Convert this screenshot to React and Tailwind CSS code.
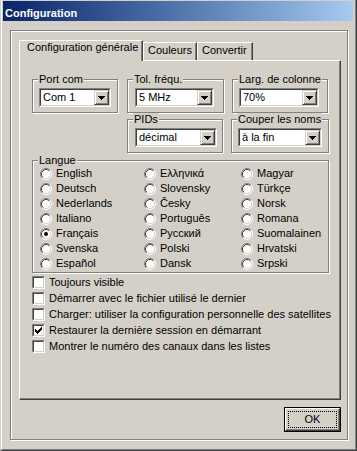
import React from 'react';

const FONT = "font-['Liberation_Sans',Arial,sans-serif]";

const languages = [
  'English', 'Ελληνικά', 'Magyar',
  'Deutsch', 'Slovensky', 'Türkçe',
  'Nederlands', 'Česky', 'Norsk',
  'Italiano', 'Português', 'Romana',
  'Français', 'Русский', 'Suomalainen',
  'Svenska', 'Polski', 'Hrvatski',
  'Español', 'Dansk', 'Srpski',
];

const options = [
  { label: 'Toujours visible', checked: false },
  { label: 'Démarrer avec le fichier utilisé le dernier', checked: false },
  { label: 'Charger: utiliser la configuration personnelle des satellites', checked: false },
  { label: 'Restaurer la dernière session en démarrant', checked: true },
  { label: 'Montrer le numéro des canaux dans les listes', checked: false },
];

function Group({ label, className, children }) {
  return (
    <div className={`relative border border-[#808080] shadow-[inset_1px_1px_0_#fff,1px_1px_0_#fff] ${className}`}>
      <span className="absolute -top-[7px] left-[5px] bg-[#d4d0c8] px-[1px] leading-[13px]">{label}</span>
      {children}
    </div>
  );
}

function Combo({ value, className }) {
  return (
    <div className={`h-[19px] border border-t-[#808080] border-l-[#808080] border-r-white border-b-white ${className}`}>
      <div className="flex h-full border border-t-[#404040] border-l-[#404040] border-r-[#d4d0c8] border-b-[#d4d0c8] bg-white">
        <span className="flex-1 pl-[2px] leading-[15px] whitespace-nowrap">{value}</span>
        <div className="flex h-full w-[15px] items-center justify-center border border-t-[#d4d0c8] border-l-[#d4d0c8] border-r-[#404040] border-b-[#404040] bg-[#d4d0c8] shadow-[inset_1px_1px_0_#fff,inset_-1px_-1px_0_#808080]">
          <svg width="7" height="4" shapeRendering="crispEdges">
            <path d="M0 0h7v1H0zM1 1h5v1H1zM2 2h3v1H2zM3 3h1v1H3z" fill="#000" />
          </svg>
        </div>
      </div>
    </div>
  );
}

function Radio({ checked }) {
  return (
    <svg width="12" height="12" className="shrink-0">
      <circle cx="6" cy="6" r="5" fill="#fff" />
      <path d="M2.11 9.89 A5.5 5.5 0 0 1 9.89 2.11" fill="none" stroke="#808080" />
      <path d="M9.89 2.11 A5.5 5.5 0 0 1 2.11 9.89" fill="none" stroke="#fff" />
      <path d="M2.82 9.18 A4.5 4.5 0 0 1 9.18 2.82" fill="none" stroke="#404040" />
      <path d="M9.18 2.82 A4.5 4.5 0 0 1 2.82 9.18" fill="none" stroke="#d4d0c8" />
      {checked && <circle cx="6" cy="6" r="2" fill="#000" />}
    </svg>
  );
}

function Checkbox({ checked }) {
  return (
    <div className="h-[13px] w-[13px] shrink-0 border border-t-[#808080] border-l-[#808080] border-r-white border-b-white">
      <div className="flex h-full items-center justify-center border border-t-[#404040] border-l-[#404040] border-r-[#d4d0c8] border-b-[#d4d0c8] bg-white">
        {checked && (
          <svg width="7" height="7" shapeRendering="crispEdges">
            <path
              d="M6 0h1v1H6zM5 1h2v1H5zM0 2h1v1H0zM4 2h3v1H4zM0 3h2v1H0zM3 3h3v1H3zM0 4h5v1H0zM1 5h3v1H1zM2 6h1v1H2z"
              fill="#000"
            />
          </svg>
        )}
      </div>
    </div>
  );
}

export default function App() {
  return (
    <div className={`h-[451px] w-[357px] border-l border-r border-b border-l-[#d4d0c8] border-r-[#404040] border-b-[#404040] bg-[#d4d0c8] text-[11px] text-black ${FONT}`}>
      <div className="h-full border-l border-r border-b border-l-white border-r-[#808080] border-b-[#808080] pl-[1px] pr-[2px] pt-[1px]">
        {/* title bar */}
        <div className="h-[20px] bg-linear-to-r from-[#0a246a] to-[#a6caf0] pl-[2px] pt-[6px] font-bold leading-[13px] text-white">
          Configuration
        </div>

        {/* etched frame */}
        <div className="ml-[7px] mt-[9px] h-[410px] w-[338px] border border-[#808080] pl-[8px] pt-[9px] shadow-[inset_1px_1px_0_#fff,1px_1px_0_#fff]">
          <div className="w-[322px]">
            {/* tabs */}
            <div className="flex h-[20px] items-end">
              <div className="relative z-10 -mb-[1px] h-[21px] w-[124px] border-l border-r border-t border-l-white border-t-white border-r-[#404040] bg-[#d4d0c8] pl-[7px] leading-[13px] shadow-[inset_-1px_0_0_#808080]">
                Configuration générale
              </div>
              <div className="h-[18px] w-[54px] border-l border-r border-t border-l-white border-t-white border-r-[#404040] pl-[4px] pt-[1px] leading-[13px] shadow-[inset_-1px_0_0_#808080]">
                Couleurs
              </div>
              <div className="h-[18px] w-[56px] border-l border-r border-t border-l-white border-t-white border-r-[#404040] pl-[4px] pt-[1px] leading-[13px] shadow-[inset_-1px_0_0_#808080]">
                Convertir
              </div>
            </div>

            {/* tab panel */}
            <div className="flex h-[340px] flex-col border border-t-white border-l-white border-r-[#404040] border-b-[#404040] pl-[12px] pt-[18px] shadow-[inset_-1px_-1px_0_#808080]">
              <div className="flex h-[34px]">
                <Group label="Port com" className="w-[86px] pl-[6px] pt-[8px]">
                  <Combo value="Com 1" className="w-[72px]" />
                </Group>
                <Group label="Tol. fréqu." className="ml-[9px] w-[97px] pl-[7px] pt-[8px]">
                  <Combo value="5 MHz" className="w-[79px]" />
                </Group>
                <Group label="Larg. de colonne" className="ml-[8px] w-[96px] pl-[6px] pt-[8px]">
                  <Combo value="70%" className="w-[80px]" />
                </Group>
              </div>

              <div className="mt-[6px] flex h-[34px] pl-[95px]">
                <Group label="PIDs" className="w-[96px] pl-[7px] pt-[8px]">
                  <Combo value="décimal" className="w-[82px]" />
                </Group>
                <Group label="Couper les noms" className="ml-[8px] w-[98px] pl-[6px] pt-[8px]">
                  <Combo value="à la fin" className="w-[84px]" />
                </Group>
              </div>

              <Group label="Langue" className="mt-[7px] h-[113px] w-[297px] pl-[7px] pt-[5px]">
                <div className="grid grid-cols-[104px_97px_1fr]">
                  {languages.map((lang) => (
                    <div key={lang} className="flex h-[15px] items-center gap-[4px] leading-[15px]">
                      <Radio checked={lang === 'Français'} />
                      <span className="whitespace-nowrap">{lang}</span>
                    </div>
                  ))}
                </div>
              </Group>

              <div className="mt-[1px] flex flex-col">
                {options.map((opt) => (
                  <div key={opt.label} className="flex h-[16px] items-center gap-[4px] leading-[16px]">
                    <Checkbox checked={opt.checked} />
                    <span className="whitespace-nowrap">{opt.label}</span>
                  </div>
                ))}
              </div>
            </div>

            {/* OK button */}
            <div className="mt-[7px] flex justify-end">
              <div className="h-[25px] w-[57px] border border-black">
                <div className="h-full border border-t-white border-l-white border-r-[#404040] border-b-[#404040] p-[2px] shadow-[inset_-1px_-1px_0_#808080]">
                  <div className="flex h-full items-center justify-center border border-dotted border-black leading-[13px]">
                    OK
                  </div>
                </div>
              </div>
            </div>
          </div>
        </div>
      </div>
    </div>
  );
}
